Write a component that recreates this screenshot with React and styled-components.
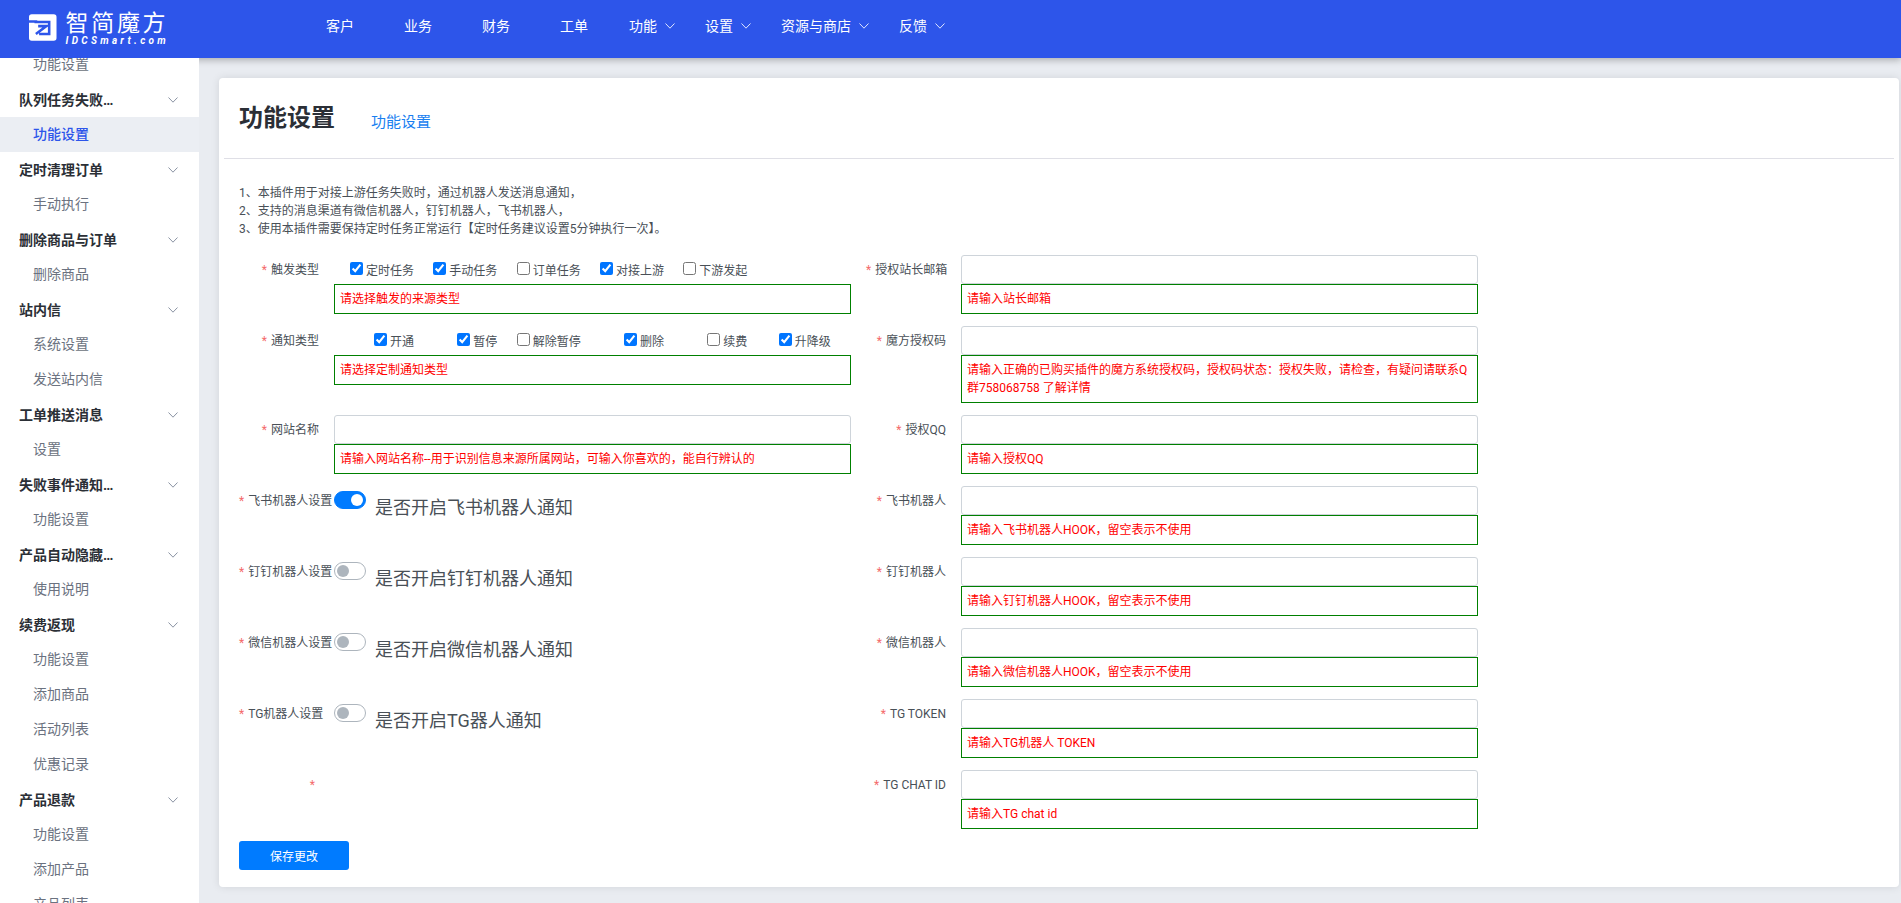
import React from "react";
import styled, { createGlobalStyle } from "styled-components";

const FONT = `Roboto, "Noto Sans CJK SC", sans-serif`;

const Global = createGlobalStyle`
  html, body { margin: 0; padding: 0; height: 100%; overflow: hidden; background: #e9ecf1; }
  body { font-family: ${FONT}; }
  * { box-sizing: border-box; }
`;

const Page = styled.div`
  width: 1901px;
  height: 903px;
  display: flex;
  flex-direction: column;
  overflow: hidden;
`;

const TopBar = styled.header`
  position: relative;
  z-index: 1;
  flex: none;
  height: 58px;
  display: flex;
  padding-left: 29px;
  background: #2d55ea;
  box-shadow: 0 2px 7px rgba(0, 0, 0, 0.28);
`;

const Logo = styled.div`
  width: 140px;
  display: flex;
  gap: 9px;
  padding-top: 13px;
  color: #fff;
`;

const LogoWords = styled.div`
  display: flex;
  flex-direction: column;
`;

const LogoCn = styled.span`
  font-size: 23px;
  line-height: 22px;
  height: 23px;
  letter-spacing: 2.7px;
  font-weight: 400;
  white-space: nowrap;
`;

const LogoEn = styled.span`
  font-size: 10px;
  line-height: 9px;
  font-weight: 700;
  font-style: italic;
  letter-spacing: 3.3px;
  white-space: nowrap;
`;

const Nav = styled.nav`
  display: flex;
  margin-left: 132px;
  height: 50px;
`;

const NavItem = styled.a`
  display: flex;
  align-items: center;
  gap: 8px;
  padding: ${(p) => (p.$menu ? "0 14px 0 16px" : "0 25px")};
  font-size: 14px;
  color: #fff;
  white-space: nowrap;
`;

const Chevron = styled.svg`
  width: 10px;
  height: 6px;
  flex: none;
  margin-top: 1px;
  fill: none;
  stroke: ${(p) => p.$color};
  stroke-width: 1;
`;

const Body = styled.div`
  flex: 1;
  min-height: 0;
  display: flex;
`;

const Sidebar = styled.aside`
  position: relative;
  z-index: 2;
  flex: none;
  width: 199px;
  height: 845px;
  overflow: hidden;
  background: #fff;
`;

const SideList = styled.div`
  margin-top: -11px;
`;

const SideGroup = styled.div`
  height: 35px;
  display: flex;
  align-items: center;
  justify-content: space-between;
  padding: 0 21px 0 19px;
  font-size: 14px;
  font-weight: 700;
  color: #2b2f36;
`;

const SideGroupText = styled.span`
  max-width: 98px;
  margin-top: -1px;
  overflow: hidden;
  white-space: nowrap;
  text-overflow: ellipsis;
`;

const SideItem = styled.div`
  height: 35px;
  line-height: 35px;
  padding-left: 33px;
  font-size: 14px;
  font-weight: ${(p) => (p.$active ? 500 : 400)};
  color: ${(p) => (p.$active ? "#2d55ea" : "#6b7280")};
  background: ${(p) => (p.$active ? "#ebeef3" : "#fff")};
`;

const Main = styled.main`
  flex: 1;
  min-width: 0;
  padding: 20px 2px 0 20px;
`;

const Card = styled.section`
  height: 809px;
  background: #fff;
  border-radius: 4px;
  box-shadow: 0 0 8px rgba(0, 0, 0, 0.1);
  color: #495057;
`;

const CardHead = styled.div`
  height: 81px;
  margin: 0 5px;
  padding: 0 15px 0 15px;
  display: flex;
  align-items: center;
  gap: 36px;
  border-bottom: 1px solid #dfdfe6;
`;

const Title = styled.h1`
  margin: 0;
  font-size: 24px;
  font-weight: 700;
  color: #2b2f36;
  line-height: 1;
`;

const Tab = styled.a`
  font-size: 15px;
  color: #1a7ff0;
  margin-top: 5px;
`;

const Content = styled.div`
  padding: 25px 20px 0;
`;

const Notes = styled.div`
  font-size: 12px;
  line-height: 18px;
  margin-bottom: 17px;
`;

const FormGrid = styled.div`
  display: grid;
  grid-template-columns: 612px 612px;
  column-gap: 15px;
  row-gap: 12px;
  align-items: start;
`;

const Field = styled.div`
  display: flex;
  gap: 15px;
`;

const Label = styled.label`
  flex: none;
  width: 80px;
  font-size: 12px;
  line-height: 30px;
  text-align: right;
  white-space: nowrap;
`;

const Star = styled.span`
  color: #f46a6a;
  margin-right: 4px;
`;

const Control = styled.div`
  width: 517px;
`;

const TextInput = styled.input`
  display: block;
  width: 100%;
  height: 29px;
  border: 1px solid #ced4da;
  border-radius: 3px;
  background: #fff;
  outline: none;
`;

const Help = styled.div`
  border: 1px solid #008000;
  padding: 5px;
  font-size: 12px;
  line-height: 18px;
  color: #ff0000;
`;

const Checks = styled.div`
  height: 29px;
  margin-left: -3.33px;
  display: grid;
  grid-template-columns: repeat(6, 83.33px);
`;

const CheckItem = styled.label`
  display: flex;
  align-items: center;
  justify-content: flex-end;
  gap: 3px;
  font-size: 12px;
  white-space: nowrap;
`;

const CheckBox = styled.input`
  width: 13px;
  height: 13px;
  margin: 0 0 3px;
`;

const SwitchRow = styled.div`
  display: flex;
  gap: 9px;
  align-items: flex-start;
`;

const Switch = styled.span`
  flex: none;
  width: 32px;
  height: 18px;
  margin-top: 5px;
  padding: 0 2px;
  display: flex;
  align-items: center;
  justify-content: ${(p) => (p.$on ? "flex-end" : "flex-start")};
  border: 1px solid ${(p) => (p.$on ? "#007bff" : "#adb5bd")};
  border-radius: 9px;
  background: ${(p) => (p.$on ? "#007bff" : "#fff")};
  &::after {
    content: "";
    width: 12px;
    height: 12px;
    border-radius: 50%;
    background: ${(p) => (p.$on ? "#fff" : "#adb5bd")};
  }
`;

const SwitchText = styled.span`
  font-size: 18px;
  line-height: 27px;
  margin-top: 8px;
  white-space: nowrap;
`;

const SaveButton = styled.button`
  display: block;
  width: 110px;
  height: 29px;
  margin-top: 12px;
  border: 0;
  border-radius: 3px;
  background: #007bff;
  color: #fff;
  font-family: ${FONT};
  font-size: 12px;
`;

const ChevronDown = ({ color }) => (
  <Chevron $color={color} viewBox="0 0 10 6">
    <polyline points="0.5,0.5 5,5.2 9.5,0.5" />
  </Chevron>
);

const LogoMark = () => (
  <svg width="30" height="29" viewBox="0 0 30 29">
    <rect x="0" y="0" width="30" height="29" rx="3" fill="#fff" />
    <path
      d="M0 8 H9 M6 8.5 H22 V21.5 H11 M7.5 21.5 L19 13 H10"
      fill="none"
      stroke="#2d55ea"
      strokeWidth="2.8"
    />
  </svg>
);

const sideData = [
  { item: "功能设置" },
  { group: "队列任务失败通知" },
  { item: "功能设置", active: true },
  { group: "定时清理订单" },
  { item: "手动执行" },
  { group: "删除商品与订单" },
  { item: "删除商品" },
  { group: "站内信" },
  { item: "系统设置" },
  { item: "发送站内信" },
  { group: "工单推送消息" },
  { item: "设置" },
  { group: "失败事件通知推送" },
  { item: "功能设置" },
  { group: "产品自动隐藏显示" },
  { item: "使用说明" },
  { group: "续费返现" },
  { item: "功能设置" },
  { item: "添加商品" },
  { item: "活动列表" },
  { item: "优惠记录" },
  { group: "产品退款" },
  { item: "功能设置" },
  { item: "添加产品" },
  { item: "产品列表" },
];

const navData = [
  { t: "客户" },
  { t: "业务" },
  { t: "财务" },
  { t: "工单" },
  { t: "功能", menu: true },
  { t: "设置", menu: true },
  { t: "资源与商店", menu: true },
  { t: "反馈", menu: true },
];

const TextField = ({ label, help }) => (
  <Field>
    <Label>
      <Star>*</Star>
      {label}
    </Label>
    <Control>
      <TextInput type="text" />
      <Help>{help}</Help>
    </Control>
  </Field>
);

const ChecksField = ({ label, help, items }) => (
  <Field>
    <Label>
      <Star>*</Star>
      {label}
    </Label>
    <Control>
      <Checks>
        {items.map(([t, on]) => (
          <CheckItem key={t}>
            <CheckBox type="checkbox" defaultChecked={on} />
            {t}
          </CheckItem>
        ))}
      </Checks>
      <Help>{help}</Help>
    </Control>
  </Field>
);

const SwitchField = ({ label, text, on }) => (
  <Field>
    <Label>
      <Star>*</Star>
      {label}
    </Label>
    <SwitchRow>
      <Switch $on={on} />
      <SwitchText>{text}</SwitchText>
    </SwitchRow>
  </Field>
);

export default function App() {
  return (
    <Page>
      <Global />
      <TopBar>
        <Logo>
          <LogoMark />
          <LogoWords>
            <LogoCn>智简魔方</LogoCn>
            <LogoEn>IDCSmart.com</LogoEn>
          </LogoWords>
        </Logo>
        <Nav>
          {navData.map((n) => (
            <NavItem key={n.t} $menu={n.menu}>
              {n.t}
              {n.menu && <ChevronDown color="#dfe6ff" />}
            </NavItem>
          ))}
        </Nav>
      </TopBar>
      <Body>
        <Sidebar>
          <SideList>
            {sideData.map((s, i) =>
              s.group ? (
                <SideGroup key={i}>
                  <SideGroupText>{s.group}</SideGroupText>
                  <ChevronDown color="#8a93a3" />
                </SideGroup>
              ) : (
                <SideItem key={i} $active={s.active}>
                  {s.item}
                </SideItem>
              )
            )}
          </SideList>
        </Sidebar>
        <Main>
          <Card>
            <CardHead>
              <Title>功能设置</Title>
              <Tab>功能设置</Tab>
            </CardHead>
            <Content>
              <Notes>
                1、本插件用于对接上游任务失败时，通过机器人发送消息通知，
                <br />
                2、支持的消息渠道有微信机器人，钉钉机器人，飞书机器人，
                <br />
                3、使用本插件需要保持定时任务正常运行【定时任务建议设置5分钟执行一次】。
              </Notes>
              <FormGrid>
                <ChecksField
                  label="触发类型"
                  help="请选择触发的来源类型"
                  items={[
                    ["定时任务", true],
                    ["手动任务", true],
                    ["订单任务", false],
                    ["对接上游", true],
                    ["下游发起", false],
                  ]}
                />
                <TextField label="授权站长邮箱" help="请输入站长邮箱" />
                <ChecksField
                  label="通知类型"
                  help="请选择定制通知类型"
                  items={[
                    ["开通", true],
                    ["暂停", true],
                    ["解除暂停", false],
                    ["删除", true],
                    ["续费", false],
                    ["升降级", true],
                  ]}
                />
                <TextField
                  label="魔方授权码"
                  help="请输入正确的已购买插件的魔方系统授权码，授权码状态：授权失败，请检查，有疑问请联系Q群758068758 了解详情"
                />
                <TextField
                  label="网站名称"
                  help="请输入网站名称--用于识别信息来源所属网站，可输入你喜欢的，能自行辨认的"
                />
                <TextField label="授权QQ" help="请输入授权QQ" />
                <SwitchField label="飞书机器人设置" text="是否开启飞书机器人通知" on />
                <TextField label="飞书机器人" help="请输入飞书机器人HOOK，留空表示不使用" />
                <SwitchField label="钉钉机器人设置" text="是否开启钉钉机器人通知" />
                <TextField label="钉钉机器人" help="请输入钉钉机器人HOOK，留空表示不使用" />
                <SwitchField label="微信机器人设置" text="是否开启微信机器人通知" />
                <TextField label="微信机器人" help="请输入微信机器人HOOK，留空表示不使用" />
                <SwitchField label="TG机器人设置" text="是否开启TG器人通知" />
                <TextField label="TG TOKEN" help="请输入TG机器人 TOKEN" />
                <Field>
                  <Label>
                    <Star>*</Star>
                  </Label>
                </Field>
                <TextField label="TG CHAT ID" help="请输入TG chat id" />
              </FormGrid>
              <SaveButton>保存更改</SaveButton>
            </Content>
          </Card>
        </Main>
      </Body>
    </Page>
  );
}
